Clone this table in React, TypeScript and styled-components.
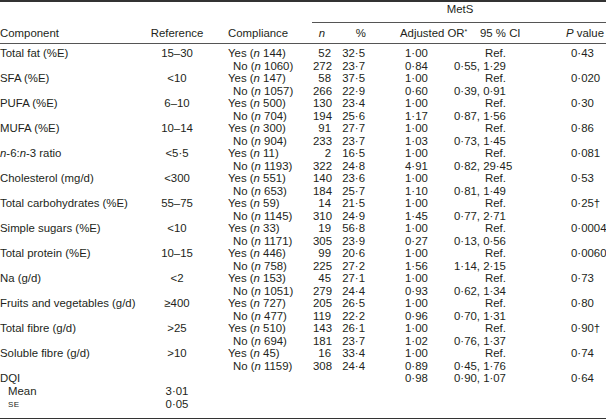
import React from 'react';
import styled, { createGlobalStyle } from 'styled-components';

const GlobalStyle = createGlobalStyle`
  html, body {
    margin: 0;
    padding: 0;
    background: #fff;
  }
  body {
    font-family: "Liberation Sans", Arial, sans-serif;
    color: #231f20;
  }
`;

const Frame = styled.div`
  width: 606px;
  border-top: 2px solid #333;
  border-bottom: 2px solid #333;
`;

const Table = styled.table`
  width: 606px;
  table-layout: fixed;
  border-collapse: separate;
  border-spacing: 0;
  font-size: 11.4px;
  line-height: 12.5px;
  white-space: nowrap;
`;

const Col = styled.col<{ $w: number }>`
  width: ${(p) => p.$w}px;
`;

const GroupHead = styled.th`
  font-weight: normal;
  text-align: center;
  padding: 1px 0 6.5px 2px;
  border-bottom: 1px solid #555;
`;

const HeadCell = styled.th<{ $align?: string; $pad?: number }>`
  font-weight: normal;
  text-align: ${(p) => p.$align || 'left'};
  padding: 3.5px 0 4px ${(p) => p.$pad || 0}px;
  vertical-align: bottom;
  border-bottom: 1px solid #555;
`;

const Row = styled.tr<{ $first?: boolean; $last?: boolean }>`
  td {
    padding-top: ${(p) => (p.$first ? 3 : 0)}px;
    padding-bottom: ${(p) => (p.$last ? 6.5 : 0)}px;
  }
`;

const LabelCell = styled.td<{ $indent?: boolean }>`
  padding-left: ${(p) => (p.$indent ? 8 : 0)}px;
  text-align: left;
`;

const RefCell = styled.td`
  text-align: center;
`;

const ComplianceCell = styled.td<{ $no?: boolean }>`
  padding-left: ${(p) => (p.$no ? 29 : 24)}px;
`;

const NumCell = styled.td`
  text-align: right;
`;

const OrCell = styled.td`
  padding-left: 39px;
`;

const CiCell = styled.td<{ $isRef?: boolean }>`
  padding-left: ${(p) => (p.$isRef ? 31 : 0)}px;
`;

const PCell = styled.td`
  padding-left: 5px;
`;

const SmallCaps = styled.span`
  font-size: 8px;
  letter-spacing: 0.3px;
`;

const Sup = styled.sup`
  font-size: 7px;
  line-height: 0;
  vertical-align: 3px;
`;

const I = styled.i``;

type Line = { n: string; pct: string; or: string; ci: string; p?: string };
type Item = {
  label: React.ReactNode;
  ref: string;
  yes: string;
  no: string;
  a: Line;
  b: Line;
};

const items: Item[] = [
  { label: 'Total fat (%E)', ref: '15–30', yes: '144', no: '1060', a: { n: '52', pct: '32·5', or: '1·00', ci: 'Ref.', p: '0·43' }, b: { n: '272', pct: '23·7', or: '0·84', ci: '0·55, 1·29' } },
  { label: 'SFA (%E)', ref: '<10', yes: '147', no: '1057', a: { n: '58', pct: '37·5', or: '1·00', ci: 'Ref.', p: '0·020' }, b: { n: '266', pct: '22·9', or: '0·60', ci: '0·39, 0·91' } },
  { label: 'PUFA (%E)', ref: '6–10', yes: '500', no: '704', a: { n: '130', pct: '23·4', or: '1·00', ci: 'Ref.', p: '0·30' }, b: { n: '194', pct: '25·6', or: '1·17', ci: '0·87, 1·56' } },
  { label: 'MUFA (%E)', ref: '10–14', yes: '300', no: '904', a: { n: '91', pct: '27·7', or: '1·00', ci: 'Ref.', p: '0·86' }, b: { n: '233', pct: '23·7', or: '1·03', ci: '0·73, 1·45' } },
  { label: <><I>n</I>-6:<I>n</I>-3 ratio</>, ref: '<5·5', yes: '11', no: '1193', a: { n: '2', pct: '16·5', or: '1·00', ci: 'Ref.', p: '0·081' }, b: { n: '322', pct: '24·8', or: '4·91', ci: '0·82, 29·45' } },
  { label: 'Cholesterol (mg/d)', ref: '<300', yes: '551', no: '653', a: { n: '140', pct: '23·6', or: '1·00', ci: 'Ref.', p: '0·53' }, b: { n: '184', pct: '25·7', or: '1·10', ci: '0·81, 1·49' } },
  { label: 'Total carbohydrates (%E)', ref: '55–75', yes: '59', no: '1145', a: { n: '14', pct: '21·5', or: '1·00', ci: 'Ref.', p: '0·25†' }, b: { n: '310', pct: '24·9', or: '1·45', ci: '0·77, 2·71' } },
  { label: 'Simple sugars (%E)', ref: '<10', yes: '33', no: '1171', a: { n: '19', pct: '56·8', or: '1·00', ci: 'Ref.', p: '0·0004' }, b: { n: '305', pct: '23·9', or: '0·27', ci: '0·13, 0·56' } },
  { label: 'Total protein (%E)', ref: '10–15', yes: '446', no: '758', a: { n: '99', pct: '20·6', or: '1·00', ci: 'Ref.', p: '0·0060' }, b: { n: '225', pct: '27·2', or: '1·56', ci: '1·14, 2·15' } },
  { label: 'Na (g/d)', ref: '<2', yes: '153', no: '1051', a: { n: '45', pct: '27·1', or: '1·00', ci: 'Ref.', p: '0·73' }, b: { n: '279', pct: '24·4', or: '0·93', ci: '0·62, 1·34' } },
  { label: 'Fruits and vegetables (g/d)', ref: '≥400', yes: '727', no: '477', a: { n: '205', pct: '26·5', or: '1·00', ci: 'Ref.', p: '0·80' }, b: { n: '119', pct: '22·2', or: '0·96', ci: '0·70, 1·31' } },
  { label: 'Total fibre (g/d)', ref: '>25', yes: '510', no: '694', a: { n: '143', pct: '26·1', or: '1·00', ci: 'Ref.', p: '0·90†' }, b: { n: '181', pct: '23·7', or: '1·02', ci: '0·76, 1·37' } },
  { label: 'Soluble fibre (g/d)', ref: '>10', yes: '45', no: '1159', a: { n: '16', pct: '33·4', or: '1·00', ci: 'Ref.', p: '0·74' }, b: { n: '308', pct: '24·4', or: '0·89', ci: '0·45, 1·76' } },
];

const widths = [150, 54, 108, 20, 34, 88, 112, 40];

const StatCells = ({ line }: { line: Line }) => (
  <>
    <NumCell>{line.n}</NumCell>
    <NumCell>{line.pct}</NumCell>
    <OrCell>{line.or}</OrCell>
    <CiCell $isRef={line.ci === 'Ref.'}>{line.ci}</CiCell>
    <PCell>{line.p}</PCell>
  </>
);

export default function App() {
  return (
    <>
      <GlobalStyle />
      <Frame>
        <Table>
          <colgroup>
            {widths.map((w, i) => (
              <Col key={i} $w={w} />
            ))}
          </colgroup>
          <thead>
            <tr>
              <HeadCell rowSpan={2}>Component</HeadCell>
              <HeadCell rowSpan={2} $align="center">Reference</HeadCell>
              <HeadCell rowSpan={2} $pad={24}>Compliance</HeadCell>
              <GroupHead colSpan={5}>MetS</GroupHead>
            </tr>
            <tr>
              <HeadCell $align="center"><I>n</I></HeadCell>
              <HeadCell $align="right">%</HeadCell>
              <HeadCell $pad={34}>Adjusted OR<Sup>*</Sup></HeadCell>
              <HeadCell $pad={26}>95 % CI</HeadCell>
              <HeadCell><I>P</I> value</HeadCell>
            </tr>
          </thead>
          <tbody>
            {items.map((it, i) => (
              <React.Fragment key={i}>
                <Row $first={i === 0}>
                  <LabelCell>{it.label}</LabelCell>
                  <RefCell>{it.ref}</RefCell>
                  <ComplianceCell>Yes (<I>n</I> {it.yes})</ComplianceCell>
                  <StatCells line={it.a} />
                </Row>
                <Row>
                  <LabelCell />
                  <RefCell />
                  <ComplianceCell $no>No (<I>n</I> {it.no})</ComplianceCell>
                  <StatCells line={it.b} />
                </Row>
              </React.Fragment>
            ))}
            <Row>
              <LabelCell>DQI</LabelCell>
              <RefCell />
              <ComplianceCell />
              <StatCells line={{ n: '', pct: '', or: '0·98', ci: '0·90, 1·07', p: '0·64' }} />
            </Row>
            <Row>
              <LabelCell $indent>Mean</LabelCell>
              <RefCell>3·01</RefCell>
              <ComplianceCell />
              <StatCells line={{ n: '', pct: '', or: '', ci: '' }} />
            </Row>
            <Row $last>
              <LabelCell $indent><SmallCaps>SE</SmallCaps></LabelCell>
              <RefCell>0·05</RefCell>
              <ComplianceCell />
              <StatCells line={{ n: '', pct: '', or: '', ci: '' }} />
            </Row>
          </tbody>
        </Table>
      </Frame>
    </>
  );
}
